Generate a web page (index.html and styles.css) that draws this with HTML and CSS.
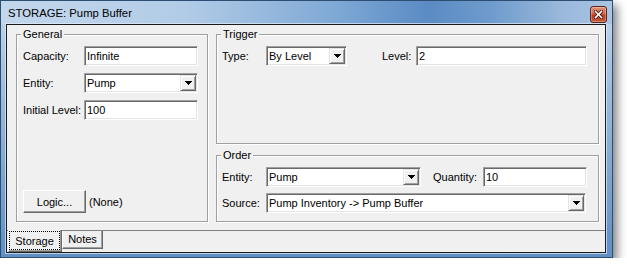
FILE: index.html
```html
<!DOCTYPE html>
<html>
<head>
<meta charset="utf-8">
<link rel="stylesheet" href="styles.css">
</head>
<body>
<div class="window">
  <div class="titlebar">
    <span class="title">STORAGE: Pump Buffer</span>
    <span class="close">
      <svg width="9" height="9" viewBox="0 0 9 9"><path d="M1.5 1.5 L7.5 7.5 M7.5 1.5 L1.5 7.5" stroke="#4a170e" stroke-width="3.2" stroke-linecap="square"/><path d="M1.5 1.5 L7.5 7.5 M7.5 1.5 L1.5 7.5" stroke="#fff" stroke-width="1.6" stroke-linecap="square"/></svg>
    </span>
  </div>
  <div class="client">
    <div class="main">
      <fieldset class="group general">
        <legend>General</legend>
        <div class="gbody gen-body">
          <div class="row"><span class="lbl w61">Capacity:</span><div class="edit w114">Infinite</div></div>
          <div class="row"><span class="lbl w61">Entity:</span><div class="combo w114"><span>Pump</span><span class="drop"><svg width="7" height="4"><rect x="0" y="0" width="7" height="1"/><rect x="1" y="1" width="5" height="1"/><rect x="2" y="2" width="3" height="1"/><rect x="3" y="3" width="1" height="1"/></svg></span></div></div>
          <div class="row"><span class="lbl w61">Initial Level:</span><div class="edit w114">100</div></div>
          <div class="row btnrow"><span class="btn">Logic...</span><span class="note">(None)</span></div>
        </div>
      </fieldset>
      <div class="rightcol">
        <fieldset class="group trigger">
          <legend>Trigger</legend>
          <div class="gbody trig-body">
            <div class="row">
              <span class="lbl w44">Type:</span>
              <div class="combo w81"><span>By Level</span><span class="drop"><svg width="7" height="4"><rect x="0" y="0" width="7" height="1"/><rect x="1" y="1" width="5" height="1"/><rect x="2" y="2" width="3" height="1"/><rect x="3" y="3" width="1" height="1"/></svg></span></div>
              <span class="lbl w34 ml35">Level:</span>
              <div class="edit w171">2</div>
            </div>
          </div>
        </fieldset>
        <fieldset class="group order">
          <legend>Order</legend>
          <div class="gbody order-body">
            <div class="row">
              <span class="lbl w44">Entity:</span>
              <div class="combo w155"><span>Pump</span><span class="drop"><svg width="7" height="4"><rect x="0" y="0" width="7" height="1"/><rect x="1" y="1" width="5" height="1"/><rect x="2" y="2" width="3" height="1"/><rect x="3" y="3" width="1" height="1"/></svg></span></div>
              <span class="lbl w50 ml12">Quantity:</span>
              <div class="edit w104">10</div>
            </div>
            <div class="row">
              <span class="lbl w44">Source:</span>
              <div class="combo w320"><span>Pump Inventory -&gt; Pump Buffer</span><span class="drop"><svg width="7" height="4"><rect x="0" y="0" width="7" height="1"/><rect x="1" y="1" width="5" height="1"/><rect x="2" y="2" width="3" height="1"/><rect x="3" y="3" width="1" height="1"/></svg></span></div>
            </div>
          </div>
        </fieldset>
      </div>
    </div>
    <div class="tabs">
      <div class="tab active"><span class="focus">Storage</span></div>
      <div class="tab">Notes</div>
    </div>
  </div>
</div>
</body>
</html>
```
FILE: styles.css
```css
* { box-sizing: border-box; }
body {
  margin: 0;
  background: #fff;
  font-family: "Liberation Sans", Arial, sans-serif;
  font-size: 11px;
  color: #000;
}
.window {
  width: 613px;
  height: 258px;
  border: 1px solid #2e4d72;
  background: linear-gradient(to bottom, #c4d8ed 0%, #9dbcdd 35%, #5f8fc4 100%);
  box-shadow: 4px 5px 9px rgba(0,0,0,0.5);
  display: flex;
  flex-direction: column;
}
.titlebar {
  height: 23px;
  display: flex;
  align-items: center;
  justify-content: space-between;
  padding: 0 5px 0 7px;
  background: linear-gradient(to right, #c3d7ec 0%, #b2cce7 30%, #7ea8d5 55%, #5a8bc3 70%, #6e9bcc 80%, #9ab9dc 92%, #a9c5e2 100%);
}
.title {
  font-size: 11.3px;
  color: #000;
  line-height: 14px;
  margin-top: 1px;
}
.close {
  width: 17px;
  height: 17px;
  margin-top: 3px;
  border: 1px solid #5e2418;
  border-radius: 3px;
  background: linear-gradient(to bottom, #e0937c 0%, #d2664a 45%, #bb3d22 55%, #c9583b 100%);
  box-shadow: inset 0 0 0 1px rgba(255,255,255,0.3);
  display: flex;
  align-items: center;
  justify-content: center;
}
.client {
  flex: 1;
  margin: 0 6px 4px 5px;
  border: 1px solid #1a1a1a;
  background: #f0f0f0;
  display: flex;
  flex-direction: column;
  box-shadow: 0 0 0 1px rgba(225,236,248,0.7);
}
.main {
  height: 205px;
  display: flex;
  gap: 8px;
  padding: 3px 6px 0 9px;
  align-items: flex-start;
}
.group {
  margin: 0;
  padding: 0;
  min-width: 0;
  border: 1px solid #a0a0a0;
  box-shadow: inset 1px 1px #fff, 1px 1px #fff;
}
.group legend {
  margin-left: 4px;
  padding: 0 2px;
  line-height: 13px;
  font-size: 11px;
  background: #f0f0f0;
}
.general { width: 192px; }
.rightcol {
  width: 383px;
  display: flex;
  flex-direction: column;
  gap: 5px;
}
.gbody {
  display: flex;
  flex-direction: column;
  gap: 7px;
}
.gen-body { height: 180px; padding: 5px 8px 8px 6px; }
.trig-body { height: 102px; padding: 5px 10px 0 5px; }
.order-body { height: 59px; padding: 5px 10px 0 5px; gap: 6px; }
.row {
  display: flex;
  align-items: center;
  height: 20px;
}
.btnrow { margin-top: auto; height: 23px; }
.lbl { flex: none; white-space: nowrap; }
.w34 { width: 34px; }
.w44 { width: 44px; }
.w50 { width: 50px; }
.w61 { width: 61px; }
.w81 { width: 81px; }
.w104 { width: 104px; }
.w114 { width: 114px; }
.w155 { width: 155px; }
.w171 { width: 171px; }
.w320 { width: 320px; }
.ml35 { margin-left: 35px; }
.ml12 { margin-left: 12px; }
.edit, .combo {
  flex: none;
  height: 20px;
  background: #fff;
  border: 1px solid;
  border-color: #a0a0a0 #fff #fff #a0a0a0;
  box-shadow: inset 1px 1px #696969, inset -1px -1px #e3e3e3;
  padding: 0 0 0 2px;
  display: flex;
  align-items: center;
  white-space: nowrap;
}
.combo { justify-content: space-between; padding-right: 1px; }
.drop {
  width: 16px;
  height: 16px;
  background: #f0f0f0;
  border: 1px solid;
  border-color: #e3e3e3 #696969 #696969 #e3e3e3;
  box-shadow: inset 1px 1px #fff, inset -1px -1px #a0a0a0;
  display: flex;
  align-items: center;
  justify-content: center;
}
.drop svg { display: block; fill: #000; }
.btn {
  width: 63px;
  height: 23px;
  background: #f0f0f0;
  border: 1px solid;
  border-color: #fff #696969 #696969 #fff;
  box-shadow: inset -1px -1px #a0a0a0;
  display: flex;
  align-items: center;
  justify-content: center;
}
.note { margin-left: 3px; }
.tabs {
  flex: 1;
  border-top: 1px solid #808080;
  display: flex;
  align-items: flex-start;
  padding-left: 1px;
}
.tab {
  border: 1px solid;
  border-color: transparent #696969 #696969 #fff;
  border-top: none;
  box-shadow: inset -1px -1px #a0a0a0;
  background: #f0f0f0;
}
.tab.active {
  width: 54px;
  height: 22px;
  margin-top: -1px;
  padding: 1px 1px 1px 0;
}
.focus {
  display: flex;
  align-items: center;
  justify-content: center;
  height: 19px;
  border: 1px dotted #000;
}
.tab:not(.active) {
  width: 41px;
  height: 18px;
  display: flex;
  align-items: center;
  justify-content: center;
  padding-bottom: 1px;
}
```
